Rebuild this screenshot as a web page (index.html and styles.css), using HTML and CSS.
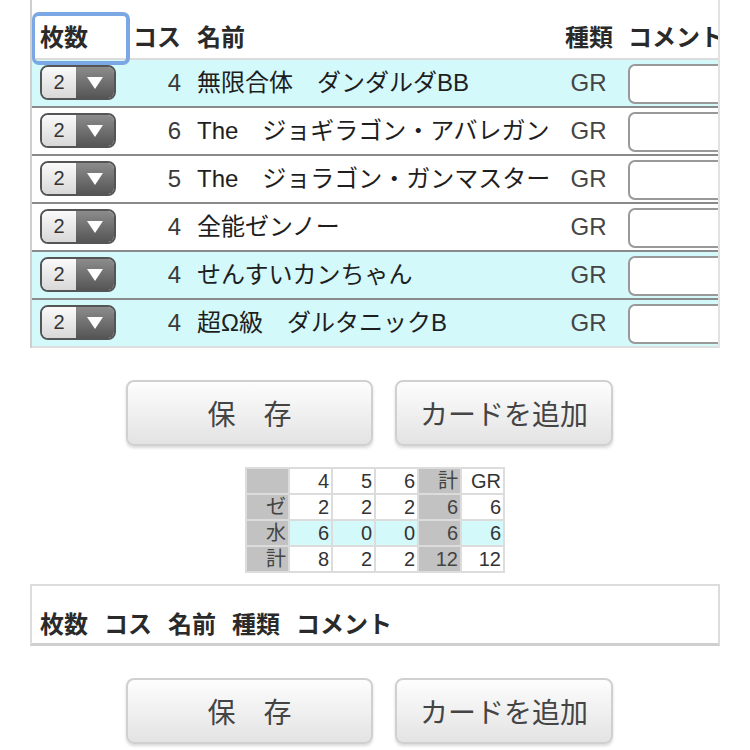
FILE: index.html
```html
<!DOCTYPE html>
<html lang="ja">
<head>
  <meta charset="UTF-8">
  <meta name="viewport" content="width=device-width, initial-scale=1.0">
  <title>デッキ編集</title>
  <link rel="stylesheet" href="styles.css">
</head>
<body>
  <div class="deck-box">
    <table class="deck">
      <colgroup>
        <col class="c-count"><col class="c-cost"><col class="c-name"><col class="c-type"><col class="c-comment">
      </colgroup>
      <thead>
        <tr>
          <th class="focused">枚数</th>
          <th class="num">コス</th>
          <th>名前</th>
          <th>種類</th>
          <th>コメント</th>
        </tr>
      </thead>
      <tbody>
        <tr class="water">
          <td><span class="count"><span class="val">2</span><span class="arrow"></span></span></td>
          <td class="num">4</td>
          <td>無限合体　ダンダルダBB</td>
          <td class="type">GR</td>
          <td><input class="comment" type="text"></td>
        </tr>
        <tr>
          <td><span class="count"><span class="val">2</span><span class="arrow"></span></span></td>
          <td class="num">6</td>
          <td>The　ジョギラゴン・アバレガン</td>
          <td class="type">GR</td>
          <td><input class="comment" type="text"></td>
        </tr>
        <tr>
          <td><span class="count"><span class="val">2</span><span class="arrow"></span></span></td>
          <td class="num">5</td>
          <td>The　ジョラゴン・ガンマスター</td>
          <td class="type">GR</td>
          <td><input class="comment" type="text"></td>
        </tr>
        <tr>
          <td><span class="count"><span class="val">2</span><span class="arrow"></span></span></td>
          <td class="num">4</td>
          <td>全能ゼンノー</td>
          <td class="type">GR</td>
          <td><input class="comment" type="text"></td>
        </tr>
        <tr class="water">
          <td><span class="count"><span class="val">2</span><span class="arrow"></span></span></td>
          <td class="num">4</td>
          <td>せんすいカンちゃん</td>
          <td class="type">GR</td>
          <td><input class="comment" type="text"></td>
        </tr>
        <tr class="water">
          <td><span class="count"><span class="val">2</span><span class="arrow"></span></span></td>
          <td class="num">4</td>
          <td>超Ω級　ダルタニックB</td>
          <td class="type">GR</td>
          <td><input class="comment" type="text"></td>
        </tr>
      </tbody>
    </table>
  </div>

  <div class="actions">
    <button>保　存</button>
    <button>カードを追加</button>
  </div>

  <table class="summary">
    <tr><td class="gray"></td><td>4</td><td>5</td><td>6</td><td class="gray">計</td><td>GR</td></tr>
    <tr><td class="gray">ゼ</td><td>2</td><td>2</td><td>2</td><td class="gray">6</td><td>6</td></tr>
    <tr class="water"><td class="gray">水</td><td>6</td><td>0</td><td>0</td><td class="gray">6</td><td>6</td></tr>
    <tr><td class="gray">計</td><td>8</td><td>2</td><td>2</td><td class="gray">12</td><td>12</td></tr>
  </table>

  <div class="deck-box empty">
    <table class="deck">
      <thead>
        <tr>
          <th>枚数</th>
          <th>コス</th>
          <th>名前</th>
          <th>種類</th>
          <th>コメント</th>
        </tr>
      </thead>
    </table>
  </div>

  <div class="actions">
    <button>保　存</button>
    <button>カードを追加</button>
  </div>
</body>
</html>
```

FILE: styles.css
```css
body {
  margin: 0;
  background: #fff;
  color: #222;
  font-family: "Liberation Sans", "Noto Sans CJK JP", sans-serif;
}

.deck-box {
  margin-left: 30px;
  width: 686px;
  border-left: 2px solid #cfcfcf;
  border-right: 2px solid #e2e2e2;
  overflow: hidden;
}

.deck {
  border-collapse: collapse;
  table-layout: fixed;
  width: 728px;
  font-size: 24px;
}

.c-count { width: 93px; }
.c-cost { width: 64px; }
.c-name { width: 368px; }
.c-type { width: 63px; }
.c-comment { width: 140px; }

.deck th {
  height: 52px;
  padding: 0 8px 6px;
  vertical-align: bottom;
  text-align: left;
  line-height: 28px;
  font-weight: bold;
  color: #2a2a2a;
  border-bottom: 2px solid #dcdcdc;
  white-space: nowrap;
}

.deck th.num {
  text-align: right;
}

.deck th.focused {
  position: relative;
}

.deck th.focused::after {
  content: "";
  position: absolute;
  left: 0;
  top: 12px;
  width: 91px;
  height: 45px;
  border: 4px solid #7ba7e4;
  border-left-width: 3px;
  border-radius: 7px;
}

.deck td {
  height: 46px;
  padding: 0 8px;
  border-bottom: 2px solid #8a8a8a;
  white-space: nowrap;
  line-height: 28px;
  color: #1e1e1e;
}

.deck tbody tr:last-child td {
  border-bottom-color: #dedede;
}

.deck tr.water td {
  background: #d4f9fb;
}

.deck td.num {
  text-align: right;
  color: #3a3a3a;
}

.deck td.type {
  text-align: center;
  color: #444;
}

.count {
  display: flex;
  width: 76px;
  height: 35px;
  box-sizing: border-box;
  border: 2px solid #555;
  border-radius: 8px;
  overflow: hidden;
  margin-top: -1px;
}

.count .val {
  width: 34px;
  background: linear-gradient(to bottom, #fafafa, #d8d8d8);
  color: #333;
  font-size: 20px;
  line-height: 31px;
  text-align: center;
}

.count .arrow {
  flex: 1;
  background: linear-gradient(to bottom, #8c8c8c, #555);
  display: flex;
  align-items: center;
  justify-content: center;
}

.count .arrow::before {
  content: "";
  border-left: 8px solid transparent;
  border-right: 8px solid transparent;
  border-top: 12px solid #fff;
}

.comment {
  display: block;
  width: 140px;
  height: 40px;
  box-sizing: border-box;
  border: 2px solid #999;
  border-radius: 7px;
  background: #fff;
  margin-top: 1px;
}

.actions {
  display: flex;
  justify-content: center;
  gap: 22px;
  margin: 32px 0 21px;
  padding-right: 11px;
}

.actions button {
  height: 66px;
  padding: 0;
  border: 2px solid #d0d0d0;
  border-radius: 8px;
  background: linear-gradient(to bottom, #fdfdfd, #e3e3e3);
  box-shadow: 0 2px 3px rgba(0, 0, 0, 0.15);
  font-family: "Noto Sans CJK JP", sans-serif;
  font-size: 28px;
  color: #444;
}

.actions button:first-child { width: 247px; }
.actions button:last-child { width: 218px; }

.summary {
  border-collapse: collapse;
  margin: 0 auto;
  font-size: 20px;
  color: #333;
}

.summary td {
  width: 37px;
  height: 24px;
  padding: 0 2px;
  border: 2px solid #dcdcdc;
  text-align: right;
  line-height: 22px;
  background: #fff;
}

.summary tr.water td {
  background: #d4f9fb;
}

.summary td.gray,
.summary tr.water td.gray {
  background: #c2c2c2;
  color: #444;
}

.deck-box.empty {
  margin-top: 11px;
  border: 2px solid #dcdcdc;
  border-bottom-color: #cfcfcf;
  border-bottom-width: 3px;
  width: 686px;
}

.deck-box.empty .deck {
  width: auto;
  table-layout: auto;
}

.deck-box.empty .deck th {
  border-bottom: none;
  height: 53px;
  padding-bottom: 4px;
}
```
